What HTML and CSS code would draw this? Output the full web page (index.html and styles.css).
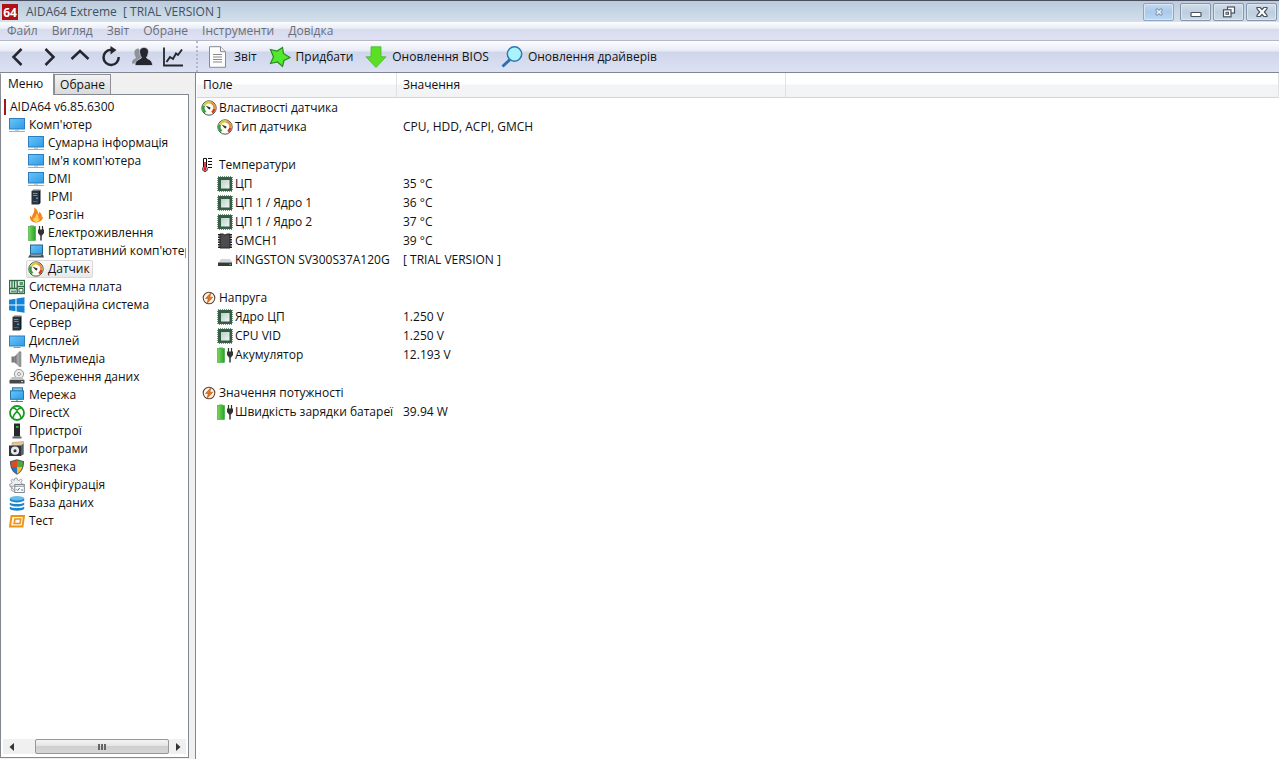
FILE: index.html
```html
<!DOCTYPE html>
<html lang="uk">
<head>
<meta charset="utf-8">
<title>AIDA64 Extreme</title>
<link rel="stylesheet" href="styles.css">
</head>
<body>
<svg class="sprite" aria-hidden="true">
  <defs>
    <linearGradient id="g-screen" x1="0" y1="0" x2="1" y2="1"><stop offset="0" stop-color="#6cc4f7"/><stop offset="1" stop-color="#2c9be8"/></linearGradient>
    <linearGradient id="g-batt" x1="0" x2="1"><stop offset="0" stop-color="#7ed957"/><stop offset="1" stop-color="#26a02c"/></linearGradient>
    <linearGradient id="g-chip" x1="0" y1="0" x2="1" y2="1"><stop offset="0" stop-color="#b8cfc6"/><stop offset="1" stop-color="#f2f7f4"/></linearGradient>
    <linearGradient id="g-metal" x1="0" x2="1"><stop offset="0" stop-color="#666"/><stop offset="1" stop-color="#c4c4c4"/></linearGradient>
  </defs>
  <symbol id="i-monitor" viewBox="0 0 16 16"><rect x=".5" y="1.500" width="15" height="10.500" fill="url(#g-screen)" stroke="#2b7fc0"/><path d="M6 12.500h4v1H6z" fill="#8aa9bd"/><path d="M0 14.500h16" stroke="#a4adb3"/></symbol>
  <symbol id="i-display" viewBox="0 0 16 16"><rect x=".5" y="3" width="15" height="10" fill="url(#g-screen)" stroke="#2b7fc0"/><path d="M4.500 14.500h7" stroke="#8a9aa5"/></symbol>
  <symbol id="i-server" viewBox="0 0 16 16"><path d="M3.500 2l2-1.500H12L11 2z" fill="#6d7784"/><path d="M3.500 2H11v13.500H3.500z" fill="#2b333d"/><path d="M11 2l1.500-1.500V14L11 15.500z" fill="#151b22"/><path d="M5 4.500h4.500M5 6.500h4.500" stroke="#6d8eae"/><path d="M8 8.500h2v1.500H8z" fill="#39a0f0"/><path d="M5 12.500h4.500" stroke="#566678"/></symbol>
  <symbol id="i-fire" viewBox="0 0 16 16"><path d="M7.500 15.500C3 15 1.500 12 2 8.500l2 2C4 7 7.500 5 6 .5c3 1.500 4.500 4 4 7 1-.8 1.200-2 1-3 2.500 2 3.500 4 2.500 6l1.500-1c0 3.500-3 6-7.500 6z" fill="#f58220"/><path d="M8 15c-2.500-.5-3.500-2.500-2.500-4.500l1.300 1C7 9.500 8.500 9 8.500 6.500c2 2 2.500 4 1.700 5.500l1.500-.7C11.500 13.500 10.500 15 8 15z" fill="#ffd34d"/></symbol>
  <symbol id="i-power" viewBox="0 0 16 16"><path d="M2 .5h4v1H2z" fill="#55b948"/><rect x=".5" y="1.500" width="7" height="14" fill="url(#g-batt)" stroke="#36a53a" stroke-width=".6"/><path d="M11.500 1v4M14.500 1v4" stroke="#333" stroke-width="1.200"/><path d="M10 4.500h6v3.500l-2 2.500h-2l-2-2.500z" fill="#333"/><path d="M13 10v5.500" stroke="#333" stroke-width="1.500"/></symbol>
  <symbol id="i-laptop" viewBox="0 0 16 16"><rect x="2.500" y="2" width="12" height="9" fill="url(#g-screen)" stroke="#26648f"/><path d="M2 11.500h13l1 3H0z" fill="#41505b"/><path d="M3 12.500h10" stroke="#9fb0bc" stroke-width=".8"/></symbol>
  <symbol id="i-gauge" viewBox="0 0 16 16"><circle cx="8" cy="8" r="7.200" fill="#fdfdf6" stroke="#4c5a4c"/><path d="M4.500 12.300A5.500 5.500 0 0 1 3 5.600" fill="none" stroke="#31a13a" stroke-width="2.400"/><path d="M3 5.600A5.500 5.500 0 0 1 9.500 2.700" fill="none" stroke="#d8c83c" stroke-width="2.200"/><path d="M9.500 2.700A5.500 5.500 0 0 1 13.300 9" fill="none" stroke="#ef8e30" stroke-width="2.400"/><path d="M13.300 9A5.500 5.500 0 0 1 11 12.600" fill="none" stroke="#d43a2c" stroke-width="2.400"/><path d="M4.500 5.500L9.500 7.500 9 9.500 7.500 9z" fill="#333"/></symbol>
  <symbol id="i-board" viewBox="0 0 16 16"><rect x=".5" y="1.500" width="15" height="13" fill="#e9f2ec" stroke="#2f6b44" stroke-width="1.300"/><path d="M3 2v7M5.500 2v7M8.200 1.500V14M1 9.500h7M8 7.500h7" stroke="#2f6b44" stroke-width="1.300"/><path d="M10.500 3h3.500v3h-3.500zM2 11.500h5v2H2z" fill="#5c9870"/><path d="M10 9.500h4V13h-4z" fill="none" stroke="#2f6b44"/></symbol>
  <symbol id="i-windows" viewBox="0 0 16 16"><path d="M0 2.700l6.500-1v5.800H0zM7.500 1.500L15.500.3v7.200h-8zM0 8.500h6.500v5.800l-6.500-1zM7.500 8.500h8v7.200l-8-1.200z" fill="#1583d5"/></symbol>
  <symbol id="i-speaker" viewBox="0 0 16 16"><path d="M2.500 5.500h3v6h-3z" fill="#777"/><path d="M5.500 5.500L10 .8v14.800l-4.500-4z" fill="url(#g-metal)"/><path d="M10 .8h2v14.800h-2z" fill="#9c9c9c" stroke="#777" stroke-width=".5"/></symbol>
  <symbol id="i-storage" viewBox="0 0 16 16"><circle cx="10" cy="5" r="4.600" fill="#ececec" stroke="#999"/><circle cx="10" cy="5" r="1.500" fill="#fff" stroke="#888" stroke-width=".8"/><path d="M3 8h10l2.500 3H.5z" fill="#bfc0c2"/><rect x=".5" y="11" width="15" height="3.500" rx=".5" fill="#45474b"/><path d="M12 12.700h2" stroke="#ddd"/></symbol>
  <symbol id="i-network" viewBox="0 0 16 16"><rect x="3.500" y=".8" width="10" height="9" fill="#7cc7ee" stroke="#2577a9"/><rect x="1.500" y="3.800" width="13" height="8.500" fill="url(#g-screen)" stroke="#2577a9"/><path d="M8 12.500V15M2 14.500h12" stroke="#408d71" stroke-width="1.200"/></symbol>
  <symbol id="i-directx" viewBox="0 0 16 16"><circle cx="8" cy="8" r="7" fill="#fff" stroke="#169b20" stroke-width="1.800"/><path d="M3.800 13C4.500 10 6 8 8 6.300 10 8 11.500 10 12.200 13M4 3c1.500 0 2.800 1 4 2.200C9.200 4 10.500 3 12 3" fill="none" stroke="#169b20" stroke-width="1.600"/></symbol>
  <symbol id="i-device" viewBox="0 0 16 16"><path d="M5 .5h6v13H5z" fill="#262a2c"/><path d="M7 3h2.500v1.800H7z" fill="#3fc04a"/><path d="M3.500 13.500h9v2h-9z" fill="#606668"/></symbol>
  <symbol id="i-apps" viewBox="0 0 16 16"><path d="M3 1.500L14.500.5v13L3 14z" fill="#e3c79d" stroke="#a98d66" stroke-width=".5"/><path d="M0 4.500h12V15H0z" fill="#30363a"/><path d="M12 4.500l2.500-2V13L12 15z" fill="#566066"/><circle cx="6" cy="9.700" r="4.100" fill="#e7ebed"/><circle cx="6" cy="9.700" r="1.500" fill="#30363a"/></symbol>
  <symbol id="i-shield" viewBox="0 0 16 16"><path d="M8 .3l-7 2C.8 8.500 3 13 8 15.800 13 13 15.200 8.500 15 2.300z" fill="#4d565c"/><path d="M8 1.300L2 3c0 2 .2 3.500.6 5H8z" fill="#dc4b24"/><path d="M8 1.300L14 3c0 2-.2 3.500-.6 5H8z" fill="#54a63c"/><path d="M8 8H2.600C3.500 11 5.200 13.200 8 14.800z" fill="#2476c9"/><path d="M8 8h5.400C12.500 11 10.800 13.200 8 14.800z" fill="#f6bd28"/></symbol>
  <symbol id="i-config" viewBox="0 0 16 16"><path d="M6 1h2l.5 2 1.500.6L11.700 2l1.500 1.500L12 5.300l.6 1.400 2 .6v2H1l-.5-2 2-.6.6-1.400L2 3.500 3.500 2l1.600 1.500z" fill="#eceff1" stroke="#9299a0" stroke-width=".9"/><path d="M1 9.300l1.500.5L3 11 2 12.700 4 14.500l2-1z" fill="#eceff1" stroke="#9299a0" stroke-width=".9"/><rect x="5.800" y="7.500" width="9.500" height="8" fill="#fff" stroke="#81888e"/><path d="M6 9.200h9" stroke="#81888e"/><path d="M7.500 12.300l1.200 1.200 2-2.500" fill="none" stroke="#337bbb"/><path d="M12 13h2" stroke="#337bbb"/></symbol>
  <symbol id="i-database" viewBox="0 0 16 16"><path d="M.8 3.200v2.400C3 8 13 8 15.200 5.600V3.200zM.8 7.400v2.400c2.200 2.400 12.200 2.400 14.400 0V7.400c-2.200 2-12.200 2-14.400 0zM.8 11.600V14c2.200 2.300 12.200 2.300 14.400 0v-2.400c-2.200 2-12.200 2-14.400 0z" fill="#1e86c8"/><ellipse cx="8" cy="3.200" rx="7.200" ry="2.200" fill="#67bce9"/></symbol>
  <symbol id="i-test" viewBox="0 0 16 16"><path d="M2.500 3H15l-1.500 10.500H1z" fill="#fff4dd" stroke="#eb9418" stroke-width="1.900"/><path d="M6 6h5.700l-.7 4.500H5.200z" fill="#fff" stroke="#eb9418" stroke-width="1.600"/></symbol>
  <symbol id="i-thermo" viewBox="0 0 16 16"><path d="M2.500 1.500h3V10c1.500 1.500.8 4.500-1.500 4.500S1 11.500 2.500 10z" fill="#fff" stroke="#111"/><path d="M3.200 5h1.600v5.500c1.200.8.800 3.300-.8 3.300s-2-2.500-.8-3.300z" fill="#dc1620"/><path d="M7 1.500h4M7 4.500h4M7 7.500h4M7 10.500h4" stroke="#111"/></symbol>
  <symbol id="i-chip" viewBox="0 0 16 16"><rect x="1" y="1" width="14" height="14" fill="#386248" stroke="#457653" stroke-width="1.600" stroke-dasharray="1 1"/><rect x="1.500" y="1.500" width="13" height="13" fill="#355b45"/><rect x="4" y="4" width="8.500" height="8.500" fill="url(#g-chip)"/></symbol>
  <symbol id="i-gmch" viewBox="0 0 16 16"><path d="M2.500 1v14M13.500 1v14" stroke="#222" stroke-width="3" stroke-dasharray="1.500 1"/><path d="M3 1h3.500c.5 1.300 2.500 1.300 3 0H13v14H3z" fill="#4c4c4f" stroke="#222"/></symbol>
  <symbol id="i-ssd" viewBox="0 0 16 16"><path d="M4 7h9l2.500 3.500H1.500z" fill="#d3d6d6"/><rect x="1" y="10.500" width="14" height="3.500" fill="#353a3a"/><path d="M12.500 12.300H14" stroke="#79cd85"/></symbol>
  <symbol id="i-bolt" viewBox="0 0 16 16"><circle cx="8" cy="8" r="5.800" fill="#fff4e6" stroke="#5b4538" stroke-width="1.100"/><path d="M10 2.500L4.500 8.500h2.800L6 13.500l5.700-6.300H8.800z" fill="#e9731d" stroke="#a34b12" stroke-width=".5"/></symbol>
</svg>

<header class="titlebar">
  <svg class="logo" viewBox="0 0 16 16" aria-hidden="true"><rect width="16" height="16" fill="#b01116"/><text x="8" y="13" text-anchor="middle" class="logo-text">64</text></svg>
  <h1 class="caption">AIDA64 Extreme&nbsp; [ TRIAL VERSION ]</h1>
  <div class="win-controls">
    <button class="win-btn pinned" aria-label="Відкріпити"><svg viewBox="0 0 16 12"><path d="M5 3h2l1 1.500L9 3h2v1.500L9.800 6 11 7.500V9H9L8 7.500 7 9H5V7.500L6.200 6 5 4.500z" fill="#e9f1fb" stroke="#7386a0" stroke-width=".9"/></svg></button>
    <button class="win-btn" aria-label="Згорнути"><svg viewBox="0 0 16 12"><rect x="3" y="6.500" width="10" height="4" rx=".8" fill="#fff" stroke="#4a5160" stroke-width="1.200"/></svg></button>
    <button class="win-btn" aria-label="Відновити"><svg viewBox="0 0 16 12"><rect x="6.500" y="1" width="7" height="6" fill="#fff" stroke="#4a5160" stroke-width="1.200"/><rect x="2.500" y="3.800" width="7.500" height="7" fill="#fff" stroke="#4a5160" stroke-width="1.200"/><rect x="5" y="6.300" width="2.500" height="2" fill="#cbd8e6" stroke="#4a5160"/></svg></button>
    <button class="win-btn" aria-label="Закрити"><svg viewBox="0 0 16 12"><path d="M3 1.500h3.200L8 3.500l1.800-2H13v1.300L10.300 6 13 9.200v1.300H9.800L8 8.500l-1.800 2H3V9.200L5.700 6 3 2.800z" fill="#fff" stroke="#4a5160" stroke-width="1.200"/></svg></button>
  </div>
</header>

<nav class="menubar">
  <button>Файл</button><button>Вигляд</button><button>Звіт</button><button>Обране</button><button>Інструменти</button><button>Довідка</button>
</nav>

<div class="toolbar" role="toolbar">
  <div class="nav-tools">
    <button aria-label="Назад"><svg viewBox="0 0 22 22"><path d="M14.500 3L6.500 11l8 8" class="stroke"/></svg></button>
    <button aria-label="Вперед"><svg viewBox="0 0 22 22"><path d="M7.500 3l8 8-8 8" class="stroke"/></svg></button>
    <button aria-label="Вгору"><svg viewBox="0 0 22 22"><path d="M2.500 13L11 5l8.500 8" class="stroke"/></svg></button>
    <button aria-label="Оновити"><svg viewBox="0 0 22 22"><path d="M11 3.800A7.600 7.600 0 1 0 18.700 11" class="stroke"/><path d="M10.500 0l6 4-6 4.500z" fill="#25272f"/></svg></button>
    <button aria-label="Користувачі"><svg viewBox="0 0 22 22"><path d="M7.500 2.500c-3 0-4.500 2.500-4 5 .3 2 1 3 1.500 4.500C2.500 13.500 1 14 1 17.500h4l7-8z" fill="#8f9299"/><path d="M13 1.500c3.500 0 5 2.700 4.300 5.500-.4 2-1 3.500-1.800 4.500.5 2 6 1.500 6 8H4c0-6.500 6-6 6.500-8C9.500 10.500 9 9 8.700 7 8 4 9.500 1.500 13 1.500z" fill="#25272f" stroke="#e1e5f3" stroke-width=".7"/></svg></button>
    <button aria-label="Графік"><svg viewBox="0 0 22 22"><path d="M2 1.500v18h19" fill="none" stroke="#25272f" stroke-width="1.800"/><path d="M4.500 16l3.500-5 3 2 3-5.500 2 1.500 4-5.500" fill="none" stroke="#25272f" stroke-width="1.900"/></svg></button>
  </div>
  <div class="main-tools">
    <button><svg viewBox="0 0 22 22"><path d="M2.500.7h11l5 5v15.600h-16z" fill="#fdfdfd" stroke="#888b92"/><path d="M13.500.7v5h5" fill="#eee" stroke="#888b92"/><path d="M6 8.500h9M6 11h9M6 13.500h9M6 16h9" stroke="#888"/></svg>Звіт</button>
    <button><svg viewBox="0 0 22 22"><path d="M1.500 3.500l6.500 1.500L13.500 1.500l1 6 6.500 4-6 3-1.500 6-5-4.500-7 1.500L4.500 11z" fill="#50e92c" stroke="#278b25" stroke-width="1.200"/></svg>Придбати</button>
    <button><svg viewBox="0 0 22 22"><path d="M6 .8h10v10h5L11 21.500 1 10.800h5z" fill="#5adf25" stroke="#4cb52a" stroke-width=".8"/></svg>Оновлення BIOS</button>
    <button><svg viewBox="0 0 22 22"><path d="M9 13.500l-7.500 7" stroke="#2f6fab" stroke-width="3"/><circle cx="13.500" cy="8" r="7.200" fill="#a9f4fb" stroke="#2f78b4" stroke-width="1.500"/></svg>Оновлення драйверів</button>
  </div>
</div>

<main class="workspace">
  <aside class="sidebar">
    <div class="tabs" role="tablist">
      <button class="tab active" role="tab" aria-selected="true">Меню</button>
      <button class="tab" role="tab" aria-selected="false">Обране</button>
    </div>
    <div class="tree-box">
      <ul class="tree">
        <li class="root"><button>AIDA64 v6.85.6300</button></li>
        <li><button><svg><use href="#i-monitor"/></svg>Комп'ютер</button>
          <ul>
            <li><button><svg><use href="#i-monitor"/></svg>Сумарна інформація</button></li>
            <li><button><svg><use href="#i-monitor"/></svg>Ім'я комп'ютера</button></li>
            <li><button><svg><use href="#i-monitor"/></svg>DMI</button></li>
            <li><button><svg><use href="#i-server"/></svg>IPMI</button></li>
            <li><button><svg><use href="#i-fire"/></svg>Розгін</button></li>
            <li><button><svg><use href="#i-power"/></svg>Електроживлення</button></li>
            <li><button><svg><use href="#i-laptop"/></svg>Портативний комп'ютер</button></li>
            <li><button class="selected"><svg><use href="#i-gauge"/></svg>Датчик</button></li>
          </ul>
        </li>
        <li><button><svg><use href="#i-board"/></svg>Системна плата</button></li>
        <li><button><svg><use href="#i-windows"/></svg>Операційна система</button></li>
        <li><button><svg><use href="#i-server"/></svg>Сервер</button></li>
        <li><button><svg><use href="#i-display"/></svg>Дисплей</button></li>
        <li><button><svg><use href="#i-speaker"/></svg>Мультимедіа</button></li>
        <li><button><svg><use href="#i-storage"/></svg>Збереження даних</button></li>
        <li><button><svg><use href="#i-network"/></svg>Мережа</button></li>
        <li><button><svg><use href="#i-directx"/></svg>DirectX</button></li>
        <li><button><svg><use href="#i-device"/></svg>Пристрої</button></li>
        <li><button><svg><use href="#i-apps"/></svg>Програми</button></li>
        <li><button><svg><use href="#i-shield"/></svg>Безпека</button></li>
        <li><button><svg><use href="#i-config"/></svg>Конфігурація</button></li>
        <li><button><svg><use href="#i-database"/></svg>База даних</button></li>
        <li><button><svg><use href="#i-test"/></svg>Тест</button></li>
      </ul>
      <div class="scrollbar">
        <button class="arrow" aria-label="Ліворуч"><svg viewBox="0 0 8 8"><path d="M6 0v8L1.500 4z" fill="#333"/></svg></button>
        <div class="track"><div class="thumb"><i></i><i></i><i></i></div></div>
        <button class="arrow" aria-label="Праворуч"><svg viewBox="0 0 8 8"><path d="M2 0v8l4.500-4z" fill="#333"/></svg></button>
      </div>
    </div>
  </aside>

  <section class="content">
    <table class="grid">
      <colgroup><col class="col-field"><col class="col-value"><col></colgroup>
      <thead><tr><th>Поле</th><th>Значення</th><th></th></tr></thead>
      <tbody>
        <tr class="group"><td><span><svg><use href="#i-gauge"/></svg>Властивості датчика</span></td><td></td><td></td></tr>
        <tr><td><span><svg><use href="#i-gauge"/></svg>Тип датчика</span></td><td>CPU, HDD, ACPI, GMCH</td><td></td></tr>
      </tbody>
      <tbody>
        <tr class="group"><td><span><svg><use href="#i-thermo"/></svg>Температури</span></td><td></td><td></td></tr>
        <tr><td><span><svg><use href="#i-chip"/></svg>ЦП</span></td><td>35 °C</td><td></td></tr>
        <tr><td><span><svg><use href="#i-chip"/></svg>ЦП 1 / Ядро 1</span></td><td>36 °C</td><td></td></tr>
        <tr><td><span><svg><use href="#i-chip"/></svg>ЦП 1 / Ядро 2</span></td><td>37 °C</td><td></td></tr>
        <tr><td><span><svg><use href="#i-gmch"/></svg>GMCH1</span></td><td>39 °C</td><td></td></tr>
        <tr><td><span><svg><use href="#i-ssd"/></svg>KINGSTON SV300S37A120G</span></td><td>[ TRIAL VERSION ]</td><td></td></tr>
      </tbody>
      <tbody>
        <tr class="group"><td><span><svg><use href="#i-bolt"/></svg>Напруга</span></td><td></td><td></td></tr>
        <tr><td><span><svg><use href="#i-chip"/></svg>Ядро ЦП</span></td><td>1.250 V</td><td></td></tr>
        <tr><td><span><svg><use href="#i-chip"/></svg>CPU VID</span></td><td>1.250 V</td><td></td></tr>
        <tr><td><span><svg><use href="#i-power"/></svg>Акумулятор</span></td><td>12.193 V</td><td></td></tr>
      </tbody>
      <tbody>
        <tr class="group"><td><span><svg><use href="#i-bolt"/></svg>Значення потужності</span></td><td></td><td></td></tr>
        <tr><td><span><svg><use href="#i-power"/></svg>Швидкість зарядки батареї</span></td><td>39.94 W</td><td></td></tr>
      </tbody>
    </table>
  </section>
</main>
</body>
</html>
```
FILE: styles.css
```css
* { box-sizing: border-box; }

html, body { height: 100%; }

body {
  margin: 0;
  display: flex;
  flex-direction: column;
  overflow: hidden;
  background: #f0f0f0;
  color: #111;
  font: 12px/18px "Open Sans", "Noto Sans", sans-serif;
}

button {
  margin: 0;
  padding: 0;
  border: 0;
  background: none;
  color: inherit;
  font: inherit;
  white-space: nowrap;
}

ul { margin: 0; padding: 0; list-style: none; }

.sprite { position: absolute; width: 0; height: 0; }

/* Title bar */
.titlebar {
  display: flex;
  align-items: center;
  flex: none;
  height: 22px;
  padding: 0 2px;
  border-top: 1px solid #4a4f60;
  background: linear-gradient(#bccbdc, #c9d8e6 60%, #d3e0eb);
}
.logo { width: 16px; height: 16px; }
.logo-text { font: bold 12px "Open Sans", sans-serif; fill: #fff; }
.caption {
  margin: 0 auto 0 8px;
  font-size: 12px;
  font-weight: 400;
  color: #44505e;
}
.win-controls { display: flex; gap: 2px; height: 18px; }
.win-btn {
  display: grid;
  place-items: center;
  width: 31px;
  border: 1px solid #8595aa;
  border-radius: 2px;
  background: linear-gradient(#d3deea, #bfcedf 50%, #cbd9e7);
  box-shadow: inset 0 0 0 1px #dce6f0;
}
.win-btn svg { width: 16px; height: 12px; }
.win-btn.pinned {
  margin-right: 4px;
  border-color: #8aa5c8;
  background: linear-gradient(#c2d9f2, #a9c9ec 50%, #bdd8f4);
}

/* Menu bar */
.menubar {
  display: flex;
  flex: none;
  gap: 14px;
  height: 19px;
  padding: 0 7px;
  border-bottom: 1px solid #b4b8c6;
  background: linear-gradient(#fcfdfe, #e9edf6 35%, #d6dbed 40%, #dfe2f4);
  color: #6c6f7a;
}

/* Toolbar */
.toolbar {
  display: flex;
  flex: none;
  height: 32px;
  border-bottom: 1px solid #82868f;
  background: linear-gradient(#fdfdfe, #e7ebf6 32%, #d0d6ea 36%, #dce1f4);
}
.toolbar svg { width: 22px; height: 22px; }
.stroke { fill: none; stroke: #25272f; stroke-width: 2.5; }
.nav-tools {
  display: flex;
  width: 198px;
  padding-left: 2px;
  border-right: 2px dotted #b3b8c8;
}
.nav-tools button { display: grid; place-items: center; width: 31px; }
.main-tools { display: flex; gap: 12px; padding-left: 9px; }
.main-tools button { display: flex; align-items: center; gap: 5px; }

/* Workspace */
.workspace { display: flex; flex: 1; min-height: 0; }

.sidebar {
  display: flex;
  flex-direction: column;
  flex: none;
  width: 189px;
  margin-right: 6px;
  padding-bottom: 1px;
}
.tabs { display: flex; align-items: flex-end; height: 21px; }
.tab {
  height: 20px;
  padding: 0 5px;
  border: 1px solid #8c8f96;
  border-bottom: 0;
  background: linear-gradient(#f3f3f3, #dadada);
}
.tab.active {
  height: 22px;
  margin-bottom: -1px;
  padding: 0 10px 2px 7px;
  border-top-color: #fff;
  background: #fff;
  z-index: 1;
}
.tree-box {
  display: flex;
  flex-direction: column;
  flex: 1;
  min-height: 0;
  padding: 3px 2px;
  border: 1px solid #828790;
  background: #fff;
}
.tree { flex: 1; min-height: 0; overflow: hidden; }
.tree button {
  display: flex;
  align-items: center;
  gap: 4px;
  height: 18px;
  margin-left: 4px;
  padding: 0 2px 0 1px;
  border: 1px solid transparent;
  border-radius: 2px;
}
.tree svg { flex: none; width: 16px; height: 16px; }
.tree ul { padding-left: 19px; }
.tree .root button {
  height: 16px;
  margin: 1px;
  padding-left: 4px;
  border: 0;
  border-left: 2px solid #a3171a;
  border-radius: 0;
}
.tree .selected { border-color: #d9d9d9; background: linear-gradient(#fafafa, #e9e9e9); }

.scrollbar { display: flex; flex: none; height: 15px; background: #f0f0f0; }
.arrow { display: grid; place-items: center; width: 17px; }
.arrow svg { width: 8px; height: 8px; }
.track { display: flex; flex: 1; padding-left: 15px; }
.thumb {
  display: flex;
  align-items: center;
  justify-content: center;
  gap: 1px;
  flex: 1;
  border: 1px solid #979797;
  border-radius: 2px;
  background: linear-gradient(#f4f4f4, #e4e4e4 45%, #cfcfcf 50%, #d6d6d6);
}
.thumb i { width: 2px; height: 6px; background: #666; }

/* Sensor table */
.content {
  flex: 1;
  min-width: 0;
  padding-left: 1px;
  border-left: 1px solid #828790;
  background: #fff;
}
.grid { width: 100%; border-collapse: separate; border-spacing: 0; table-layout: fixed; }
.col-field { width: 200px; }
.col-value { width: 389px; }
.grid th {
  height: 25px;
  padding: 0 6px;
  border-right: 1px solid #dfe1e5;
  border-bottom: 1px solid #d5d5d5;
  background: linear-gradient(#fff 45%, #f3f4f6 50%, #f2f3f5);
  font-weight: 400;
  text-align: left;
}
.grid td { height: 19px; padding: 0 6px; white-space: nowrap; }
.grid td:first-child { padding: 0 0 0 20px; }
.grid .group td:first-child { padding-left: 4px; }
.grid span { display: flex; align-items: center; gap: 2px; }
.grid svg { flex: none; width: 16px; height: 16px; }
.grid tbody + tbody::before { content: ""; display: table-row; height: 19px; }
```
